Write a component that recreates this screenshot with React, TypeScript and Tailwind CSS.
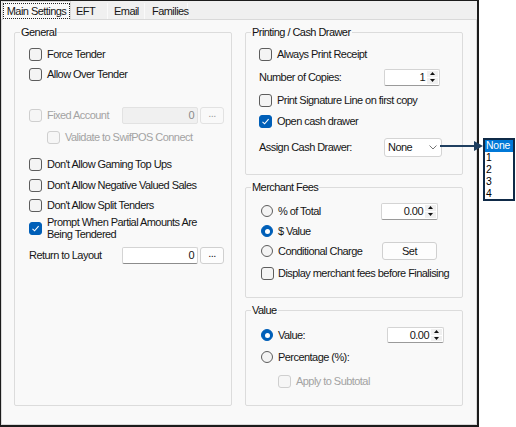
import React from 'react';

const font = { fontFamily: '"Liberation Sans", Arial, sans-serif' };

const CheckBox = ({ checked = false, disabled = false }: { checked?: boolean; disabled?: boolean }) => (
  <span
    className={`flex h-[13px] w-[13px] shrink-0 items-center justify-center rounded-[3px] border ${
      checked
        ? 'border-[#005fb8] bg-[#005fb8]'
        : disabled
        ? 'border-[#cfcfcf] bg-[#f6f6f6]'
        : 'border-[#5d5d5d] bg-[#f4f4f4]'
    }`}
  >
    {checked && (
      <svg width="9" height="9" viewBox="0 0 9 9">
        <path d="M1.5 4.8 L3.6 6.8 L7.6 2.2" fill="none" stroke="#fff" strokeWidth="1.1" />
      </svg>
    )}
  </span>
);

const Radio = ({ checked = false }: { checked?: boolean }) => (
  <span
    className={`flex h-[12px] w-[12px] shrink-0 items-center justify-center rounded-full border ${
      checked ? 'border-[#005fb8] bg-[#005fb8]' : 'border-[#5d5d5d] bg-[#f4f4f4]'
    }`}
  >
    {checked && <span className="h-[5px] w-[5px] rounded-full bg-white" />}
  </span>
);

const Spinner = ({ value, w, h = 17 }: { value: string; w: string; h?: number }) => (
  <div
    className={`flex ${w} ${h === 17 ? 'h-[17px]' : 'h-[16px]'} items-stretch rounded-[2px] border border-[#d4d4d4] border-b-[#9a9a9a] bg-white`}
  >
    <span className="flex flex-1 items-center justify-end pr-[2px] leading-none">{value}</span>
    <span className="my-[1px] mr-[1px] flex w-[11px] flex-col gap-[1px]">
      <span className="flex flex-1 items-center justify-center bg-[#f0f0f0]">
        <svg width="5" height="3" viewBox="0 0 5 3">
          <path d="M0 3 L2.5 0 L5 3 Z" fill="#111" />
        </svg>
      </span>
      <span className="flex flex-1 items-center justify-center bg-[#f0f0f0]">
        <svg width="5" height="3" viewBox="0 0 5 3">
          <path d="M0 0 L2.5 3 L5 0 Z" fill="#111" />
        </svg>
      </span>
    </span>
  </div>
);

const Group = ({
  label,
  className,
  children,
}: {
  label: string;
  className: string;
  children: React.ReactNode;
}) => (
  <div className={`relative rounded-[2px] border border-[#dcdcdc] ${className}`}>
    <span className="absolute -top-[7px] left-[5px] bg-[#f9f9f9] px-[1px] leading-[12px] text-[#111]">
      {label}
    </span>
    {children}
  </div>
);

const Row = ({ className = '', children }: { className?: string; children: React.ReactNode }) => (
  <div className={`flex h-[20px] items-center ${className}`}>{children}</div>
);

const Label = ({ className = '', children }: { className?: string; children: React.ReactNode }) => (
  <span className={`whitespace-nowrap leading-[12px] ${className}`}>{children}</span>
);

export default function App() {
  return (
    <div className="relative h-[427px] w-[516px] overflow-hidden bg-white text-[11px] tracking-[-0.55px] text-[#161616]" style={font}>
      {/* dialog window */}
      <div className="flex h-[427px] w-[479px] flex-col border-l border-t border-r-2 border-b-2 border-[#1c1c1c] bg-[#f0f0f0]">
        {/* tabs */}
        <div className="flex h-[18px] items-end pl-[1px]">
          <div className="relative z-10 -mb-[1px] flex h-[19px] w-[69px] items-center justify-center border border-b-0 border-[#d9d9d9] bg-[#f9f9f9]">
            <span className="absolute inset-x-[0px] top-[1px] bottom-[1px] border border-dotted border-[#222]" />
            <span className="leading-[12px]">Main Settings</span>
          </div>
          <div className="flex h-[16px] w-[37px] items-center border-r border-[#fafafa] pl-[5px]">EFT</div>
          <div className="flex h-[16px] w-[37px] items-center border-r border-[#fafafa] pl-[6px]">Email</div>
          <div className="flex h-[16px] w-[43px] items-center border-r border-[#fafafa] pl-[7px]">Families</div>
        </div>

        {/* tab page */}
        <div className="flex h-[406px] gap-[13px] border border-[#d9d9d9] bg-[#f9f9f9] pl-[12px] pr-[13px] pt-[12px]">
          {/* left column */}
          <Group label="General" className="h-[374px] w-[218px] pl-[14px] pt-[11px]">
            <Row>
              <CheckBox />
              <Label className="ml-[5px]">Force Tender</Label>
            </Row>
            <Row>
              <CheckBox />
              <Label className="ml-[5px]">Allow Over Tender</Label>
            </Row>
            <Row className="mt-[21px]">
              <div className="flex w-[93px] items-center">
                <CheckBox disabled />
                <Label className="ml-[5px] text-[#a3a3a3]">Fixed Account</Label>
              </div>
              <div className="flex h-[17px] w-[76px] items-center justify-end rounded-[2px] border border-[#e2e2e2] bg-[#f0f0f0] pr-[3px] text-[#8a8a8a]">
                0
              </div>
              <div className="ml-[2px] flex h-[17px] w-[24px] items-center justify-center rounded-[3px] border border-[#e2e2e2] bg-[#f9f9f9] pb-[3px] text-[#a0a0a0]">
                ...
              </div>
            </Row>
            <Row className="mt-[2px] pl-[18px]">
              <CheckBox disabled />
              <Label className="ml-[5px] text-[#a3a3a3]">Validate to SwifPOS Connect</Label>
            </Row>
            <Row className="mt-[7px]">
              <CheckBox />
              <Label className="ml-[5px]">Don't Allow Gaming Top Ups</Label>
            </Row>
            <Row className="mt-[1px]">
              <CheckBox />
              <Label className="ml-[5px]">Don't Allow Negative Valued Sales</Label>
            </Row>
            <Row>
              <CheckBox />
              <Label className="ml-[5px]">Don't Allow Split Tenders</Label>
            </Row>
            <div className="flex h-[26px] items-center">
              <CheckBox checked />
              <span className="ml-[5px] leading-[12px]">
                Prompt When Partial Amounts Are
                <br />
                Being Tendered
              </span>
            </div>
            <Row className="mt-[4px]">
              <Label className="w-[93px]">Return to Layout</Label>
              <div className="flex h-[17px] w-[76px] items-center justify-end rounded-[2px] border border-[#d4d4d4] border-b-[#8c8c8c] bg-white pr-[3px]">
                0
              </div>
              <div className="ml-[2px] flex h-[17px] w-[24px] items-center justify-center rounded-[3px] border border-[#d0d0d0] bg-[#fdfdfd] pb-[3px]">
                ...
              </div>
            </Row>
          </Group>

          {/* right column */}
          <div className="flex w-[218px] flex-col gap-[12px]">
            <Group label="Printing / Cash Drawer" className="h-[143px] pl-[13px] pt-[11px]">
              <Row>
                <CheckBox />
                <Label className="ml-[5px]">Always Print Receipt</Label>
              </Row>
              <Row className="mt-[3px]">
                <Label className="w-[125px]">Number of Copies:</Label>
                <Spinner value="1" w="w-[56px]" />
              </Row>
              <Row className="mt-[3px]">
                <CheckBox />
                <Label className="ml-[5px]">Print Signature Line on first copy</Label>
              </Row>
              <Row className="mt-[1px]">
                <CheckBox checked />
                <Label className="ml-[5px]">Open cash drawer</Label>
              </Row>
              <Row className="mt-[6px]">
                <Label className="w-[125px]">Assign Cash Drawer:</Label>
                <div className="flex h-[19px] w-[58px] items-center justify-between rounded-[3px] border border-[#d4d4d4] bg-white pl-[3px] pr-[4px]">
                  <span>None</span>
                  <svg width="8" height="5" viewBox="0 0 8 5">
                    <path d="M0.5 0.5 L4 4 L7.5 0.5" fill="none" stroke="#666" strokeWidth="0.9" />
                  </svg>
                </div>
              </Row>
            </Group>

            <Group label="Merchant Fees" className="h-[111px] pl-[15px] pt-[13px]">
              <Row>
                <div className="flex w-[120px] items-center">
                  <Radio />
                  <Label className="ml-[5px]">% of Total</Label>
                </div>
                <Spinner value="0.00" w="w-[57px]" />
              </Row>
              <Row>
                <Radio checked />
                <Label className="ml-[5px]">$ Value</Label>
              </Row>
              <Row>
                <div className="flex w-[121px] items-center">
                  <Radio />
                  <Label className="ml-[5px]">Conditional Charge</Label>
                </div>
                <div className="flex h-[18px] w-[55px] items-center justify-center rounded-[3px] border border-[#d0d0d0] bg-[#fdfdfd]">
                  Set
                </div>
              </Row>
              <Row className="mt-[2px]">
                <CheckBox />
                <Label className="ml-[4px]">Display merchant fees before Finalising</Label>
              </Row>
            </Group>

            <Group label="Value" className="h-[96px] pl-[15px] pt-[14px]">
              <Row>
                <div className="flex w-[126px] items-center">
                  <Radio checked />
                  <Label className="ml-[5px]">Value:</Label>
                </div>
                <Spinner value="0.00" w="w-[57px]" h={16} />
              </Row>
              <Row className="mt-[2px]">
                <Radio />
                <Label className="ml-[5px]">Percentage (%):</Label>
              </Row>
              <Row className="mt-[4px] pl-[17px]">
                <CheckBox disabled />
                <Label className="ml-[5px] text-[#a3a3a3]">Apply to Subtotal</Label>
              </Row>
            </Group>
          </div>
        </div>
      </div>

      {/* callout arrow */}
      <svg className="absolute left-[440px] top-[140px]" width="44" height="12" viewBox="0 0 44 12">
        <path d="M0 6 L36 6" stroke="#1f3f60" strokeWidth="2" />
        <path d="M34 1 L43 6 L34 11 Z" fill="#1f3f60" />
      </svg>

      {/* dropdown list */}
      <div className="absolute left-[483px] top-[138px] w-[32px] border-2 border-[#0f2a47] bg-white text-[10.4px] tracking-[-0.2px] text-black">
        <div className="h-[12px] bg-[#0078d7] pl-[1px] leading-[12px] text-white">None</div>
        <div className="h-[12px] pl-[1px] leading-[12px]">1</div>
        <div className="h-[12px] pl-[1px] leading-[12px]">2</div>
        <div className="h-[12px] pl-[1px] leading-[12px]">3</div>
        <div className="h-[11px] pl-[1px] leading-[12px]">4</div>
      </div>
    </div>
  );
}
